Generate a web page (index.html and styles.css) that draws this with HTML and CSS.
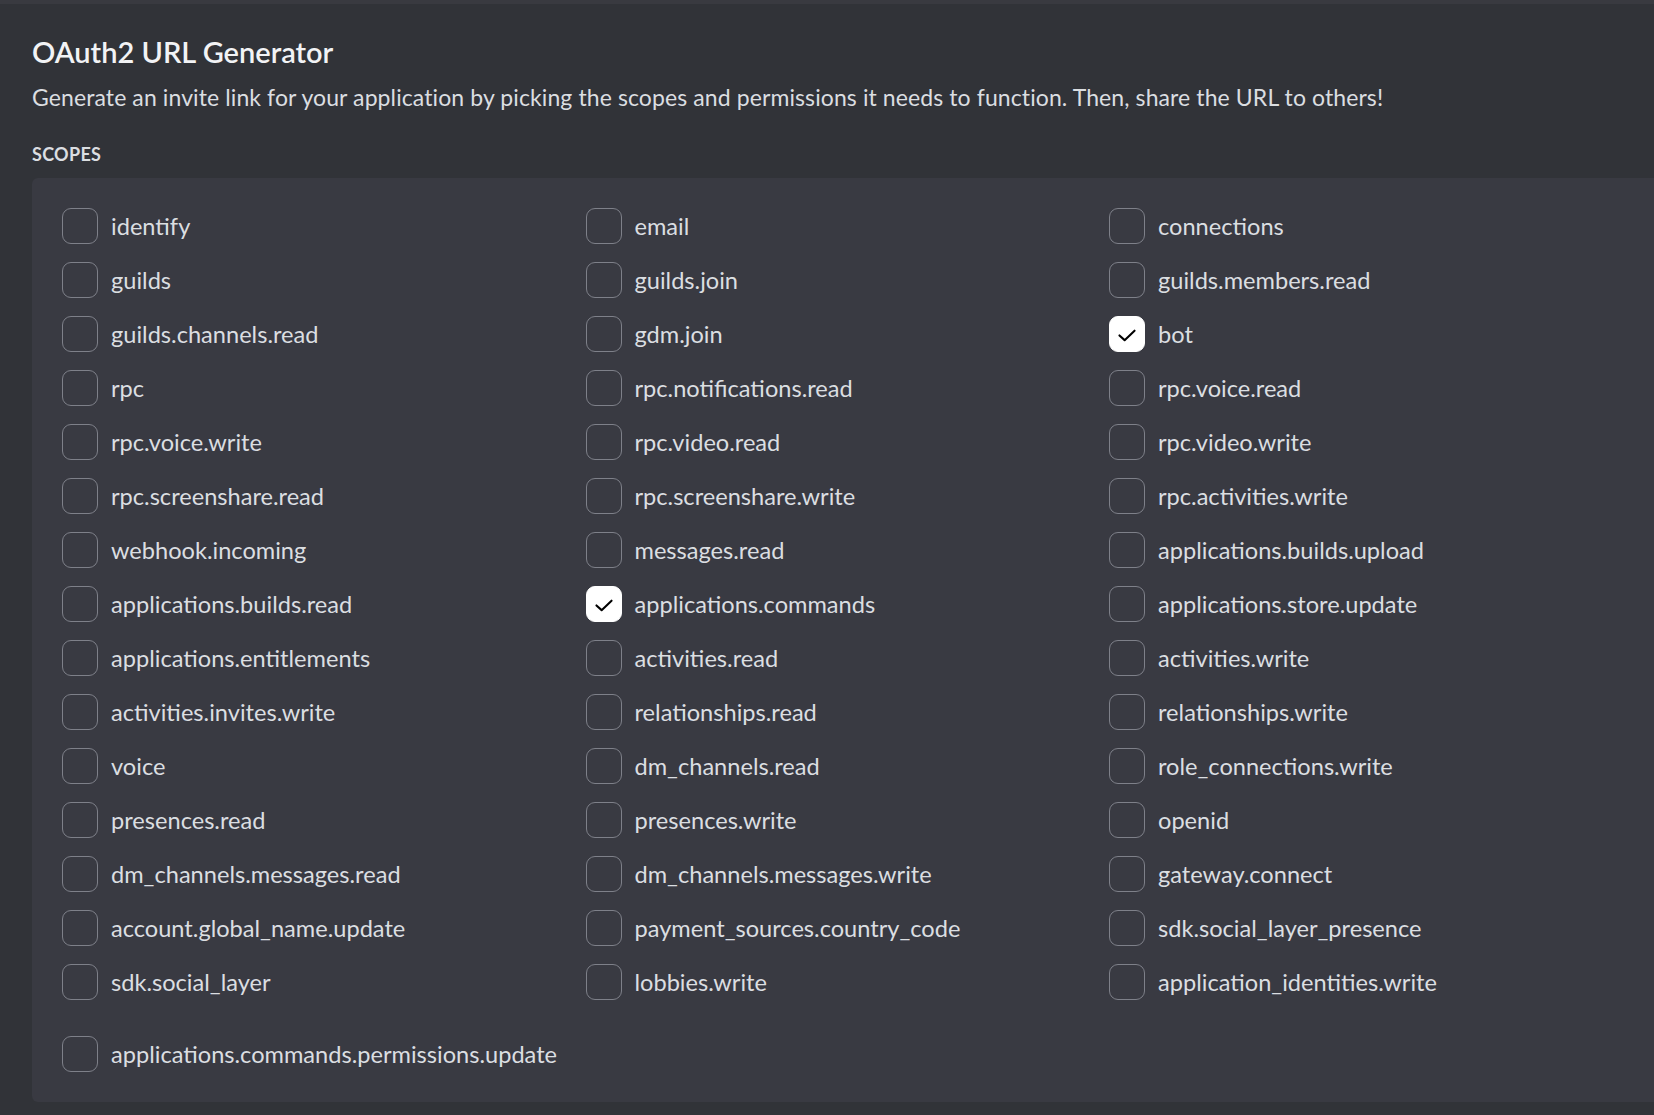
FILE: index.html
```html
<!DOCTYPE html>
<html lang="en">
<head>
    <meta charset="UTF-8">
    <title>OAuth2 URL Generator</title>
    <link rel="stylesheet" href="styles.css">
</head>
<body>
    <div class="page">
        <h1 class="title">OAuth2 URL Generator</h1>
        <p class="description">Generate an invite link for your application by picking the scopes and permissions it needs to function. Then, share the URL to others!</p>
        <h2 class="section-label">Scopes</h2>

        <div class="scope-box">
            <div class="scope-grid">
                <label class="scope"><span class="checkbox"></span><span class="scope-name">identify</span></label>
                <label class="scope"><span class="checkbox"></span><span class="scope-name">email</span></label>
                <label class="scope"><span class="checkbox"></span><span class="scope-name">connections</span></label>

                <label class="scope"><span class="checkbox"></span><span class="scope-name">guilds</span></label>
                <label class="scope"><span class="checkbox"></span><span class="scope-name">guilds.join</span></label>
                <label class="scope"><span class="checkbox"></span><span class="scope-name">guilds.members.read</span></label>

                <label class="scope"><span class="checkbox"></span><span class="scope-name">guilds.channels.read</span></label>
                <label class="scope"><span class="checkbox"></span><span class="scope-name">gdm.join</span></label>
                <label class="scope"><span class="checkbox checked"><svg viewBox="0 0 36 36"><path d="M10 19.5 L15.5 24.5 L26 14.5"/></svg></span><span class="scope-name">bot</span></label>

                <label class="scope"><span class="checkbox"></span><span class="scope-name">rpc</span></label>
                <label class="scope"><span class="checkbox"></span><span class="scope-name">rpc.notifications.read</span></label>
                <label class="scope"><span class="checkbox"></span><span class="scope-name">rpc.voice.read</span></label>

                <label class="scope"><span class="checkbox"></span><span class="scope-name">rpc.voice.write</span></label>
                <label class="scope"><span class="checkbox"></span><span class="scope-name">rpc.video.read</span></label>
                <label class="scope"><span class="checkbox"></span><span class="scope-name">rpc.video.write</span></label>

                <label class="scope"><span class="checkbox"></span><span class="scope-name">rpc.screenshare.read</span></label>
                <label class="scope"><span class="checkbox"></span><span class="scope-name">rpc.screenshare.write</span></label>
                <label class="scope"><span class="checkbox"></span><span class="scope-name">rpc.activities.write</span></label>

                <label class="scope"><span class="checkbox"></span><span class="scope-name">webhook.incoming</span></label>
                <label class="scope"><span class="checkbox"></span><span class="scope-name">messages.read</span></label>
                <label class="scope"><span class="checkbox"></span><span class="scope-name">applications.builds.upload</span></label>

                <label class="scope"><span class="checkbox"></span><span class="scope-name">applications.builds.read</span></label>
                <label class="scope"><span class="checkbox checked"><svg viewBox="0 0 36 36"><path d="M10 19.5 L15.5 24.5 L26 14.5"/></svg></span><span class="scope-name">applications.commands</span></label>
                <label class="scope"><span class="checkbox"></span><span class="scope-name">applications.store.update</span></label>

                <label class="scope"><span class="checkbox"></span><span class="scope-name">applications.entitlements</span></label>
                <label class="scope"><span class="checkbox"></span><span class="scope-name">activities.read</span></label>
                <label class="scope"><span class="checkbox"></span><span class="scope-name">activities.write</span></label>

                <label class="scope"><span class="checkbox"></span><span class="scope-name">activities.invites.write</span></label>
                <label class="scope"><span class="checkbox"></span><span class="scope-name">relationships.read</span></label>
                <label class="scope"><span class="checkbox"></span><span class="scope-name">relationships.write</span></label>

                <label class="scope"><span class="checkbox"></span><span class="scope-name">voice</span></label>
                <label class="scope"><span class="checkbox"></span><span class="scope-name">dm_channels.read</span></label>
                <label class="scope"><span class="checkbox"></span><span class="scope-name">role_connections.write</span></label>

                <label class="scope"><span class="checkbox"></span><span class="scope-name">presences.read</span></label>
                <label class="scope"><span class="checkbox"></span><span class="scope-name">presences.write</span></label>
                <label class="scope"><span class="checkbox"></span><span class="scope-name">openid</span></label>

                <label class="scope"><span class="checkbox"></span><span class="scope-name">dm_channels.messages.read</span></label>
                <label class="scope"><span class="checkbox"></span><span class="scope-name">dm_channels.messages.write</span></label>
                <label class="scope"><span class="checkbox"></span><span class="scope-name">gateway.connect</span></label>

                <label class="scope"><span class="checkbox"></span><span class="scope-name">account.global_name.update</span></label>
                <label class="scope"><span class="checkbox"></span><span class="scope-name">payment_sources.country_code</span></label>
                <label class="scope"><span class="checkbox"></span><span class="scope-name">sdk.social_layer_presence</span></label>

                <label class="scope"><span class="checkbox"></span><span class="scope-name">sdk.social_layer</span></label>
                <label class="scope"><span class="checkbox"></span><span class="scope-name">lobbies.write</span></label>
                <label class="scope"><span class="checkbox"></span><span class="scope-name">application_identities.write</span></label>
            </div>

            <div class="scope-extra">
                <label class="scope"><span class="checkbox"></span><span class="scope-name">applications.commands.permissions.update</span></label>
            </div>
        </div>
    </div>
</body>
</html>
```

FILE: styles.css
```css
body {
    margin: 0;
    background-color: #313338;
    color: #dbdee1;
    font-family: Lato, "Noto Sans", sans-serif;
    overflow: hidden;
}
.page {
    border-top: 4px solid #393a40;
    padding: 30px 0 0 32px;
}
.title {
    margin: 0;
    font-size: 29px;
    line-height: 36px;
    font-weight: 600;
    color: #f2f3f5;
}
.description {
    margin: 12px 0 0;
    font-size: 23px;
    line-height: 30px;
    letter-spacing: 0.1px;
}
.section-label {
    margin: 32px 0 0;
    font-size: 18px;
    line-height: 20px;
    font-weight: 700;
    letter-spacing: 0.3px;
    text-transform: uppercase;
    color: #dbdee1;
}
.scope-box {
    margin-top: 14px;
    background-color: #393a42;
    border-radius: 6px 0 0 6px;
    padding: 30px;
}
.scope-grid {
    display: grid;
    grid-template-columns: repeat(3, 523.5px);
    row-gap: 18px;
}
.scope-extra {
    margin-top: 36px;
}
.scope {
    display: flex;
    align-items: center;
    gap: 13px;
    height: 36px;
    cursor: pointer;
}
.checkbox {
    box-sizing: border-box;
    width: 36px;
    height: 36px;
    flex-shrink: 0;
    border: 1px solid #7e8089;
    border-radius: 9px;
    display: flex;
    align-items: center;
    justify-content: center;
}
.checkbox.checked {
    background-color: #ffffff;
    border-color: #ffffff;
}
.checkbox svg {
    width: 36px;
    height: 36px;
}
.checkbox svg path {
    fill: none;
    stroke: #000000;
    stroke-width: 2.2;
    stroke-linecap: round;
    stroke-linejoin: round;
}
.scope-name {
    font-size: 23.6px;
    line-height: 34px;
    white-space: nowrap;
}
```
